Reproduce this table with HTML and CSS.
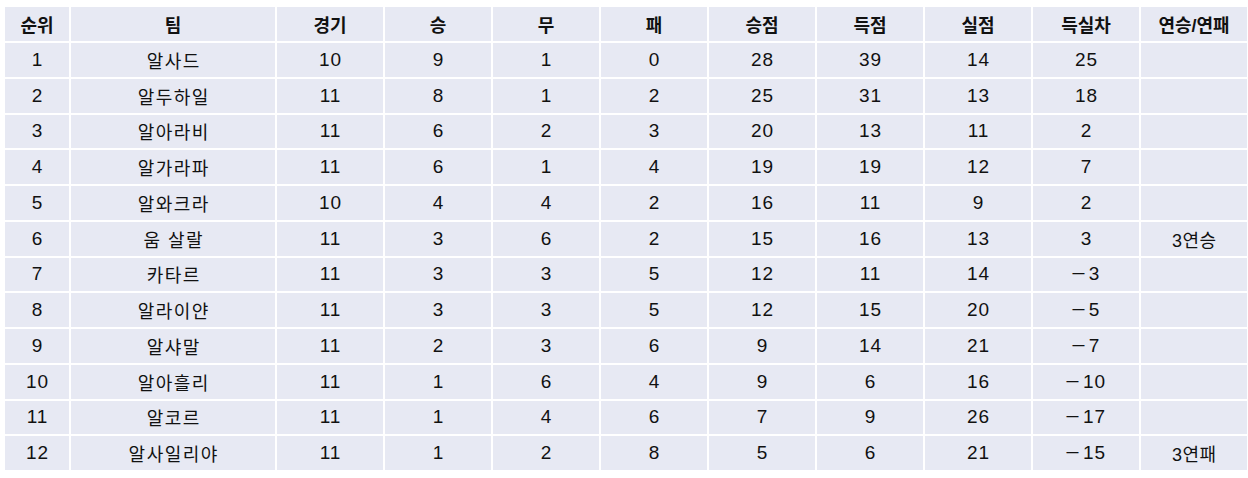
FILE: index.html
```html
<!DOCTYPE html>
<html lang="ko">
<head>
<meta charset="utf-8">
<title>순위표</title>
<link rel="stylesheet" href="styles.css">
</head>
<body>
<table class="standings">
  <colgroup>
    <col class="c-rank">
    <col class="c-team">
    <col class="c-num"><col class="c-num"><col class="c-num"><col class="c-num">
    <col class="c-num"><col class="c-num"><col class="c-num"><col class="c-num"><col class="c-num">
  </colgroup>
  <thead>
    <tr><th>순위</th><th>팀</th><th>경기</th><th>승</th><th>무</th><th>패</th><th>승점</th><th>득점</th><th>실점</th><th>득실차</th><th>연승/연패</th></tr>
  </thead>
  <tbody>
    <tr><td>1</td><td>알사드</td><td>10</td><td>9</td><td>1</td><td>0</td><td>28</td><td>39</td><td>14</td><td>25</td><td></td></tr>
    <tr><td>2</td><td>알두하일</td><td>11</td><td>8</td><td>1</td><td>2</td><td>25</td><td>31</td><td>13</td><td>18</td><td></td></tr>
    <tr><td>3</td><td>알아라비</td><td>11</td><td>6</td><td>2</td><td>3</td><td>20</td><td>13</td><td>11</td><td>2</td><td></td></tr>
    <tr><td>4</td><td>알가라파</td><td>11</td><td>6</td><td>1</td><td>4</td><td>19</td><td>19</td><td>12</td><td>7</td><td></td></tr>
    <tr><td>5</td><td>알와크라</td><td>10</td><td>4</td><td>4</td><td>2</td><td>16</td><td>11</td><td>9</td><td>2</td><td></td></tr>
    <tr><td>6</td><td>움 살랄</td><td>11</td><td>3</td><td>6</td><td>2</td><td>15</td><td>16</td><td>13</td><td>3</td><td>3연승</td></tr>
    <tr><td>7</td><td>카타르</td><td>11</td><td>3</td><td>3</td><td>5</td><td>12</td><td>11</td><td>14</td><td><span class="neg">−</span>3</td><td></td></tr>
    <tr><td>8</td><td>알라이얀</td><td>11</td><td>3</td><td>3</td><td>5</td><td>12</td><td>15</td><td>20</td><td><span class="neg">−</span>5</td><td></td></tr>
    <tr><td>9</td><td>알샤말</td><td>11</td><td>2</td><td>3</td><td>6</td><td>9</td><td>14</td><td>21</td><td><span class="neg">−</span>7</td><td></td></tr>
    <tr><td>10</td><td>알아흘리</td><td>11</td><td>1</td><td>6</td><td>4</td><td>9</td><td>6</td><td>16</td><td><span class="neg">−</span>10</td><td></td></tr>
    <tr><td>11</td><td>알코르</td><td>11</td><td>1</td><td>4</td><td>6</td><td>7</td><td>9</td><td>26</td><td><span class="neg">−</span>17</td><td></td></tr>
    <tr><td>12</td><td>알사일리야</td><td>11</td><td>1</td><td>2</td><td>8</td><td>5</td><td>6</td><td>21</td><td><span class="neg">−</span>15</td><td>3연패</td></tr>
  </tbody>
</table>
</body>
</html>
```

FILE: styles.css
```css
html, body {
  margin: 0;
  padding: 0;
  background: #ffffff;
}

body {
  padding: 5px 0 0 3px;
  font-family: "Liberation Sans", "Noto Sans CJK KR", sans-serif;
  color: #111111;
}

.standings {
  table-layout: fixed;
  width: 1246px;
  border-collapse: separate;
  border-spacing: 2px;
  font-size: 19px;
}

.c-rank { width: 64px; }
.c-team { width: 204px; }
.c-num { width: 106px; }

.standings th,
.standings td {
  background: #e7e9f3;
  padding: 0;
  text-align: center;
  vertical-align: middle;
  white-space: nowrap;
}

.standings th {
  height: 34px;
  font-size: 18px;
  font-weight: bold;
}

.standings td {
  height: 33.75px;
  font-weight: normal;
  letter-spacing: 1px;
  padding-left: 1px;
}

.standings td:nth-child(2) {
  font-size: 18px;
  letter-spacing: 1.5px;
  padding-left: 1.5px;
}

.standings td:last-child {
  font-size: 18px;
  letter-spacing: 0.5px;
  padding-left: 0.5px;
}

.neg {
  display: inline-block;
  transform: scaleX(1.3);
  margin-right: 4px;
}
```
